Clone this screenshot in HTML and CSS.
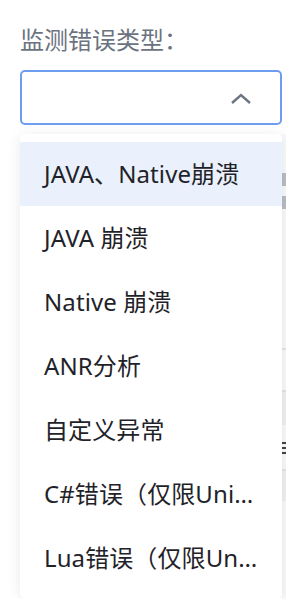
FILE: index.html
```html
<!DOCTYPE html>
<html lang="zh-CN">
<head>
    <meta charset="UTF-8">
    <title>监测错误类型</title>
    <link rel="stylesheet" href="styles.css">
</head>
<body>
    <!-- 下拉框后面被遮住的页面边缘 -->
    <div class="behind">
        <span class="chev"></span>
        <span class="line l1"></span>
        <span class="block b1"></span>
        <span class="bars"></span>
        <span class="block b2"></span>
    </div>

    <div id="wrap">
        <div class="label">监测错误类型：</div>
        <div class="select">
            <svg class="arrow" width="22" height="14" viewBox="0 0 22 14">
                <path d="M2 12 L11 4 L20 12" fill="none" stroke="#6b7482" stroke-width="2.4"/>
            </svg>
        </div>
        <ul class="menu">
            <li class="active">JAVA、Native崩溃</li>
            <li>JAVA 崩溃</li>
            <li>Native 崩溃</li>
            <li>ANR分析</li>
            <li>自定义异常</li>
            <li>C#错误（仅限Unity）</li>
            <li>Lua错误（仅限Unity）</li>
        </ul>
    </div>
</body>
</html>
```

FILE: styles.css
```css
*{margin: 0;padding: 0;box-sizing: border-box;}
ul,li{list-style: none;}
body{background: #fff; font-family: "Noto Sans", "Noto Sans CJK SC", sans-serif; color: #1f2329; overflow: hidden;}
#wrap{position: relative; padding: 25px 4px 0 20px;}

.label{font-size: 24px; line-height: 30px; color: #6b7380; height: 30px;}
.select{margin-top: 15px; height: 55px; border: 2px solid #6c9df0; border-radius: 5px; background: #fff; display: flex; align-items: center; justify-content: flex-end; padding-right: 28px;}
.arrow{display: block;}

.menu{margin-top: 9px; background: #fff; border-radius: 5px; padding: 8px 0; box-shadow: 0 2px 14px rgba(0,0,0,.09);}
.menu li{height: 64px; line-height: 64px; font-size: 24px; letter-spacing: .1px; padding: 0 22px 0 24px; white-space: nowrap; overflow: hidden; text-overflow: ellipsis;}
.menu li.active{background: #eaf1fc;}

.behind{position: absolute; left: 282px; top: 134px; width: 10px; height: 466px; background: #f8f9fb;}
.behind span{position: absolute; left: 0; display: block;}
.chev{top: 39px; width: 14px; height: 36px; border-top: 13px solid #b9bdc3; border-bottom: 13px solid #b9bdc3;}
.line{height: 2px; width: 10px; background: #e3e5e8;}
.l1{top: 214px;}
.block{width: 10px; background: #eff0f2; border-top: 2px solid #e1e3e6;}
.b1{top: 256px; height: 35px;}
.b2{top: 335px; height: 32px;}
.bars{top: 308px; left: 1px; width: 4px; height: 12px; border-top: 2px solid #444; border-bottom: 2px solid #444; background: linear-gradient(#444, #444) center / 100% 2px no-repeat;}
```
